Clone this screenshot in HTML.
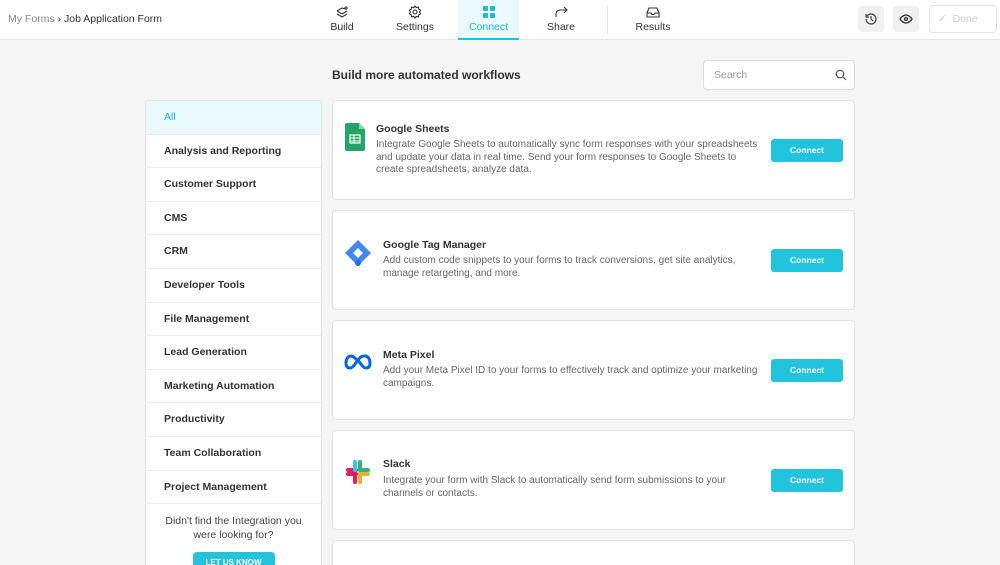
<!DOCTYPE html><html><head><style>
*{box-sizing:border-box;margin:0;padding:0}
html,body{width:1000px;height:565px;overflow:hidden}
body{background:#f5f5f5;font-family:"Liberation Sans",sans-serif;color:#333;position:relative}
.hdr{position:absolute;left:0;top:0;width:1000px;height:40px;background:#fff;border-bottom:1px solid #e6e6e6}
.bc{position:absolute;left:8px;top:13px;font-size:10.5px;color:#333}
.bc span{color:#888}
.tab{position:absolute;top:0;height:40px;text-align:center;font-size:10.5px;color:#333}
.tab svg{display:block;margin:5px auto 2px}
.tab.on{background:#e9f9fc;color:#1cb8d4;border-bottom:2px solid #1cc3dc}
.ib{position:absolute;top:6px;width:26px;height:26px;background:#f0f0f0;border-radius:4px}
.side{position:absolute;left:145px;top:100px;width:177px;height:465px;background:#fff;border:1px solid #e4e4e4;border-bottom:none;border-radius:3px 3px 0 0;overflow:hidden}
.it{height:33.6px;border-bottom:1px solid #ececec;font-size:10.5px;font-weight:bold;padding-left:18px;line-height:33px;color:#333}
.it.on{background:#e9f9fc;color:#1cb8d4;font-weight:normal}
.card{position:absolute;left:332px;width:523px;height:100px;background:#fff;border:1px solid #e2e2e2;border-radius:4px}
.card h3{position:absolute;font-size:10.5px;font-weight:bold;color:#333}
.card p{position:absolute;font-size:10px;color:#666;line-height:12.5px;width:385px}
.btn{position:absolute;left:438px;top:38px;width:72px;height:23px;background:#22c3dd;border-radius:3px;color:#fff;font-size:8.5px;font-weight:bold;text-align:center;line-height:23px}
</style></head><body>
<div class="hdr">
<div class="bc"><span>My Forms</span> › Job Application Form</div>
<div class="tab" style="left:322px;width:40px"><svg width="16" height="14" viewBox="0 0 16 14" fill="none" stroke="#333" stroke-width="1.1"><path d="M3 6l5 3 5-3M3 9l5 3 5-3M3 6l5-3 3 1M12 1v4M10 3h4"/></svg>Build</div>
<div class="tab" style="left:392px;width:46px"><svg width="14" height="14" viewBox="0 0 14 14" fill="none" stroke="#333" stroke-width="1.1"><circle cx="7" cy="7" r="2"/><path d="M7 1l1.3 1.6 2-.4.5 2 1.8 1-1 1.8 1 1.8-1.8 1-.5 2-2-.4L7 13l-1.3-1.6-2 .4-.5-2-1.8-1 1-1.8-1-1.8 1.8-1 .5-2 2 .4z"/></svg>Settings</div>
<div class="tab on" style="left:458px;width:61px"><svg width="14" height="14" viewBox="0 0 14 14" fill="#1cb8d4"><rect x="1" y="1" width="5" height="5" rx="1"/><rect x="8" y="1" width="5" height="5" rx="1"/><rect x="1" y="8" width="5" height="5" rx="1"/><rect x="8" y="8" width="5" height="5" rx="1"/></svg>Connect</div>
<div class="tab" style="left:540px;width:42px"><svg width="14" height="14" viewBox="0 0 14 14" fill="none" stroke="#333" stroke-width="1.1"><path d="M2 12V9a4 4 0 014-4h7M10 2l3 3-3 3"/></svg>Share</div>
<div style="position:absolute;left:607px;top:6px;width:1px;height:28px;background:#e6e6e6"></div>
<div class="tab" style="left:632px;width:42px"><svg width="14" height="14" viewBox="0 0 14 14" fill="none" stroke="#333" stroke-width="1.1"><path d="M1 8l2-5h8l2 5v4H1zM1 8h4l1 1.5h2L9 8h4"/></svg>Results</div>
<div class="ib" style="left:858px"><svg width="26" height="26" viewBox="0 0 26 26" fill="none" stroke="#444" stroke-width="1.2"><path d="M8 13a5 5 0 105-5 5 5 0 00-4 2M8 8v3h3M13 10v3l2 2"/></svg></div>
<div class="ib" style="left:893px"><svg width="26" height="26" viewBox="0 0 26 26" fill="none" stroke="#333" stroke-width="1.3"><path d="M7 13s2.5-4 6-4 6 4 6 4-2.5 4-6 4-6-4-6-4z"/><circle cx="13" cy="13" r="1.5"/></svg></div>
<div style="position:absolute;left:929px;top:5px;width:68px;height:28px;border:1px solid #e4e4e4;border-radius:4px;color:#ccc;font-size:10.5px;line-height:26px;padding-left:8px">✓ &nbsp;Done</div>
</div>
<div style="position:absolute;left:332px;top:68px;font-size:12px;font-weight:bold;color:#333">Build more automated workflows</div>
<div style="position:absolute;left:703px;top:60px;width:152px;height:30px;background:#fff;border:1px solid #ddd;border-radius:4px;font-size:10.5px;color:#999;line-height:28px;padding-left:10px">Search<svg style="position:absolute;right:7px;top:8px" width="12" height="12" viewBox="0 0 12 12" fill="none" stroke="#555" stroke-width="1.2"><circle cx="5" cy="5" r="3.8"/><path d="M8 8l3 3"/></svg></div>
<div class="side">
<div class="it on">All</div><div class="it">Analysis and Reporting</div><div class="it">Customer Support</div><div class="it">CMS</div><div class="it">CRM</div><div class="it">Developer Tools</div><div class="it">File Management</div><div class="it">Lead Generation</div><div class="it">Marketing Automation</div><div class="it">Productivity</div><div class="it">Team Collaboration</div><div class="it">Project Management</div>
<div style="text-align:center;font-size:10.5px;color:#444;line-height:14px;margin-top:10px">Didn't find the Integration you<br>were looking for?</div>
<div style="margin:10px auto 0;width:82px;height:22px;background:#22c3dd;border-radius:4px;color:#fff;font-size:8px;font-weight:bold;text-align:center;line-height:22px">LET US KNOW</div>
</div>
<div class="card" style="top:100px">
<svg style="position:absolute;left:12px;top:22px" width="20" height="28" viewBox="0 0 20 28"><path d="M0 2a2 2 0 012-2h12l6 6v20a2 2 0 01-2 2H2a2 2 0 01-2-2z" fill="#23a566"/><path d="M14 0v6h6z" fill="#8ed1b1"/><rect x="5" y="12" width="10" height="8" fill="none" stroke="#fff" stroke-width="1.2"/><path d="M5 15h10M5 18h10M9 12v8" stroke="#fff" stroke-width="1"/></svg>
<h3 style="left:43px;top:22px">Google Sheets</h3>
<p style="left:43px;top:38px">Integrate Google Sheets to automatically sync form responses with your spreadsheets and update your data in real time. Send your form responses to Google Sheets to create spreadsheets, analyze data.</p>
<div class="btn">Connect</div></div>
<div class="card" style="top:210px">
<svg style="position:absolute;left:11px;top:28px" width="28" height="28" viewBox="0 0 28 28"><path d="M14 1l13 13-13 13L1 14z" fill="#4285f4"/><path d="M14 9l5 5-5 5-5-5z" fill="#fff"/><circle cx="14" cy="24" r="3" fill="#246fdb"/></svg>
<h3 style="left:50px;top:28px">Google Tag Manager</h3>
<p style="left:50px;top:44px">Add custom code snippets to your forms to track conversions, get site analytics, manage retargeting, and more.</p>
<div class="btn">Connect</div></div>
<div class="card" style="top:320px">
<svg style="position:absolute;left:11px;top:33px" width="28" height="16" viewBox="0 0 28 16" fill="none" stroke="#0668e1" stroke-width="3"><path d="M14 8C11 3 9 2 7 2 4 2 2 5 2 9s2 5 4 5c3 0 5-4 8-8 3-4 5-4 7-4 3 0 5 3 5 7s-2 5-4 5c-3 0-5-4-8-8"/></svg>
<h3 style="left:50px;top:28px">Meta Pixel</h3>
<p style="left:50px;top:44px">Add your Meta Pixel ID to your forms to effectively track and optimize your marketing campaigns.</p>
<div class="btn">Connect</div></div>
<div class="card" style="top:430px">
<svg style="position:absolute;left:12px;top:28px" width="26" height="26" viewBox="0 0 26 26" stroke-linecap="round" stroke-width="4"><path d="M3 11h8" stroke="#e01e5a"/><path d="M10 3v8" stroke="#36c5f0"/><path d="M15 3v8" stroke="#2eb67d"/><path d="M15 11h8" stroke="#2eb67d"/><path d="M3 15h8" stroke="#e01e5a"/><path d="M10 15v8" stroke="#e01e5a"/><path d="M15 15h8" stroke="#ecb22e"/><path d="M15 15v8" stroke="#ecb22e"/></svg>
<h3 style="left:50px;top:27px">Slack</h3>
<p style="left:50px;top:44px">Integrate your form with Slack to automatically send form submissions to your channels or contacts.</p>
<div class="btn">Connect</div></div>
<div class="card" style="top:540px;height:25px;border-bottom:none;border-radius:4px 4px 0 0"></div>
</body></html>
